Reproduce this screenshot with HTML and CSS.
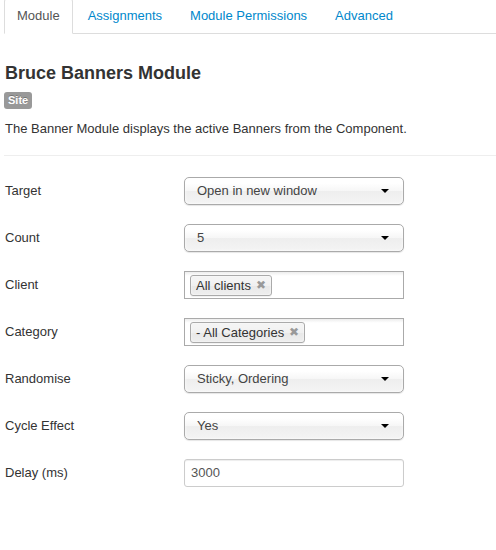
FILE: index.html
```html
<!DOCTYPE html>
<html>
<head>
<meta charset="utf-8">
<link rel="stylesheet" href="styles.css">
</head>
<body>
<div class="page">
  <ul class="tabs">
    <li class="tab active">Module</li>
    <li class="tab">Assignments</li>
    <li class="tab">Module Permissions</li>
    <li class="tab">Advanced</li>
  </ul>
  <h3 class="title">Bruce Banners Module</h3>
  <span class="badge">Site</span>
  <p class="desc">The Banner Module displays the active Banners from the Component.</p>
  <hr class="rule">
  <div class="form">
    <div class="group">
      <label class="label">Target</label>
      <div class="select"><span>Open in new window</span><i class="caret"></i></div>
    </div>
    <div class="group">
      <label class="label">Count</label>
      <div class="select"><span>5</span><i class="caret"></i></div>
    </div>
    <div class="group">
      <label class="label">Client</label>
      <div class="multi"><span class="choice">All clients<i class="x">&#x2716;</i></span></div>
    </div>
    <div class="group">
      <label class="label">Category</label>
      <div class="multi"><span class="choice">- All Categories<i class="x">&#x2716;</i></span></div>
    </div>
    <div class="group">
      <label class="label">Randomise</label>
      <div class="select"><span>Sticky, Ordering</span><i class="caret"></i></div>
    </div>
    <div class="group">
      <label class="label">Cycle Effect</label>
      <div class="select"><span>Yes</span><i class="caret"></i></div>
    </div>
    <div class="group">
      <label class="label">Delay (ms)</label>
      <div class="input">3000</div>
    </div>
  </div>
</div>
</body>
</html>
```
FILE: styles.css
```css
html, body {
  margin: 0;
  padding: 0;
  background: #fff;
}
body {
  font-family: "Liberation Sans", Arial, sans-serif;
  font-size: 13px;
  line-height: 18px;
  color: #333;
}
.page {
  padding: 0 0 0 4px;
}
.tabs {
  list-style: none;
  margin: -2px 0 0 0;
  padding: 0;
  display: flex;
  border-bottom: 1px solid #ddd;
}
.tab {
  padding: 8px 12px;
  margin-right: 2px;
  margin-bottom: -1px;
  border: 1px solid transparent;
  border-radius: 4px 4px 0 0;
  color: #0088cc;
  line-height: 18px;
}
.tab.active {
  color: #555;
  background: #fff;
  border-color: #ddd;
  border-bottom-color: transparent;
}
.title {
  margin: 27px 0 0 1px;
  font-size: 18px;
  line-height: 24px;
  font-weight: bold;
  color: #333;
}
.badge {
  display: inline-block;
  margin-top: 7px;
  padding: 2px 4px;
  font-size: 11px;
  line-height: 13px;
  font-weight: bold;
  color: #fff;
  background: #999;
  border-radius: 3px;
  text-shadow: 0 -1px 0 rgba(0,0,0,0.25);
}
.desc {
  margin: 11px 0 0 1px;
}
.rule {
  margin: 17px 0 20px 0;
  border: 0;
  border-top: 1px solid #eee;
  border-bottom: 1px solid #fff;
}
.group {
  display: flex;
  align-items: center;
  margin-bottom: 19px;
}
.label {
  width: 180px;
  padding-left: 1px;
  box-sizing: border-box;
  color: #333;
}
.select {
  width: 220px;
  height: 28px;
  box-sizing: border-box;
  border: 1px solid #aaa;
  border-radius: 5px;
  background: linear-gradient(#fff 20%, #f6f6f6 50%, #eee 52%, #f4f4f4 100%);
  box-shadow: inset 0 0 3px #fff, 0 1px 1px rgba(0,0,0,0.1);
  display: flex;
  align-items: center;
  justify-content: space-between;
  padding: 0 14px 0 12px;
  color: #444;
}
.caret {
  width: 0;
  height: 0;
  border-left: 4px solid transparent;
  border-right: 4px solid transparent;
  border-top: 4px solid #000;
}
.multi {
  width: 220px;
  height: 28px;
  box-sizing: border-box;
  border: 1px solid #aaa;
  background: linear-gradient(#eee 1%, #fff 15%);
  display: flex;
  align-items: center;
  padding-left: 5px;
}
.choice {
  display: inline-flex;
  align-items: center;
  height: 21px;
  box-sizing: border-box;
  padding: 0 5px 0 5px;
  border: 1px solid #aaa;
  border-radius: 3px;
  background: linear-gradient(#f4f4f4 20%, #f0f0f0 50%, #e8e8e8 52%, #eee 100%);
  box-shadow: inset 0 0 2px #fff, 0 1px 0 rgba(0,0,0,0.05);
  color: #333;
  line-height: 13px;
}
.x {
  font-style: normal;
  font-size: 12px;
  color: #999;
  margin-left: 5px;
}
.input {
  width: 220px;
  height: 28px;
  box-sizing: border-box;
  border: 1px solid #ccc;
  border-radius: 3px;
  padding: 0 6px;
  display: flex;
  align-items: center;
  color: #555;
  box-shadow: inset 0 1px 1px rgba(0,0,0,0.075);
}
```
